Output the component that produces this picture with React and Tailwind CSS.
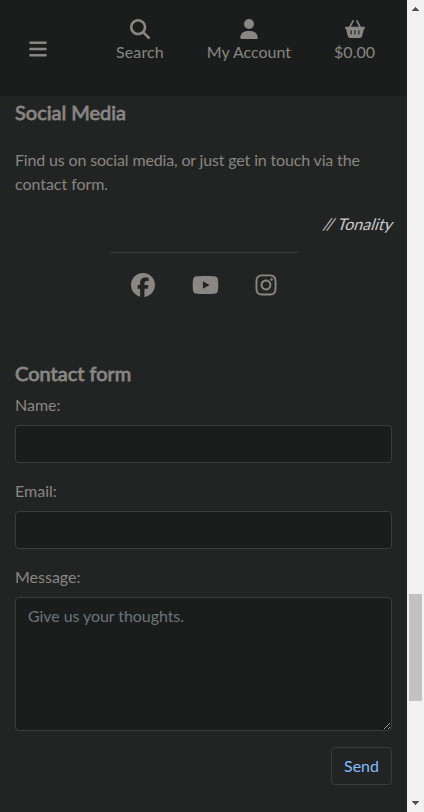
import { FaBars, FaMagnifyingGlass, FaUser, FaBasketShopping, FaFacebook, FaYoutube, FaInstagram } from "react-icons/fa6";

function NavItem({ icon: Icon, label, className }) {
  return (
    <a className={`flex flex-col items-center ${className}`}>
      <Icon className="h-5 w-auto" />
      <span className="mt-[1.5px] whitespace-nowrap leading-6">{label}</span>
    </a>
  );
}

function Header() {
  return (
    <header className="flex h-24 items-start bg-[#1b1d1c] pt-[18.5px]">
      <FaBars className="ml-[29px] mt-5 h-5 w-[18px] shrink-0" />
      <NavItem icon={FaMagnifyingGlass} label="Search" className="ml-[69px] tracking-[0.12px]" />
      <NavItem icon={FaUser} label="My Account" className="ml-[43px]" />
      <NavItem icon={FaBasketShopping} label="$0.00" className="ml-[43px]" />
    </header>
  );
}

function Heading({ children }) {
  return (
    <h2 className="text-xl font-normal leading-6 [-webkit-text-stroke:0.8px_#898684]">{children}</h2>
  );
}

function SocialMedia() {
  return (
    <section className="px-[15px] pt-1">
      <Heading>Social Media</Heading>
      <p className="mt-6 leading-6 tracking-[-0.155px]">
        Find us on social media, or just get in touch via the
        <br />
        <span className="tracking-[-0.05px]">contact form.</span>
      </p>
      <p className="-mr-[1.5px] mt-4 text-right leading-6 text-[#c9c9c9]">
        <span className="inline-block -skew-x-[18deg]">// Tonality</span>
      </p>
      <div className="mx-auto mt-4 h-px w-[189px] bg-[#383b3a]" />
      <div className="ml-[116px] mt-5 flex h-6 items-center">
        <FaFacebook className="h-6 w-6" />
        <FaYoutube className="ml-[36.5px] h-6 w-[27px]" />
        <FaInstagram className="ml-9 h-6 w-[22px]" />
      </div>
    </section>
  );
}

function Field({ label }) {
  return (
    <div className="mb-4">
      <label className="block leading-6">{label}</label>
      <input className="mt-2 block h-[38px] w-full rounded border border-[#3b3e3d] bg-[#1b1d1c] px-3 outline-none" />
    </div>
  );
}

function ContactForm() {
  return (
    <form className="mt-16 px-[15px]">
      <Heading>Contact form</Heading>
      <div className="mt-2">
        <Field label="Name:" />
        <Field label="Email:" />
      </div>
      <label className="block leading-6">Message:</label>
      <textarea
        placeholder="Give us your thoughts."
        className="mt-2 block h-[134px] w-full rounded border border-[#3b3e3d] bg-[#1b1d1c] px-3 py-1.5 leading-6 tracking-[-0.07px] outline-none placeholder:text-[#6c757d]"
      />
      <div className="mt-4 flex justify-end">
        <button type="button" className="h-[38px] w-[61px] rounded border border-[#383b3a] text-[#80bdff]">
          Send
        </button>
      </div>
    </form>
  );
}

function Arrow({ down }) {
  return (
    <svg viewBox="0 0 7 4" className={`h-1 w-[7px] ${down ? "rotate-180" : ""}`} fill="#505050" shapeRendering="crispEdges">
      <path d="M3 0h1v1h1v1h1v1h1v1H0V3h1V2h1V1h1z" />
    </svg>
  );
}

function Scrollbar() {
  return (
    <div className="flex w-[17px] shrink-0 flex-col items-center bg-[#f1f1f1]">
      <div className="flex h-[594px] items-start pt-[7px]">
        <Arrow />
      </div>
      <div className="h-[107px] w-[13px] bg-[#c1c1c1]" />
      <div className="flex grow items-end pb-[7px]">
        <Arrow down />
      </div>
    </div>
  );
}

export default function App() {
  return (
    <div className="flex h-[812px] w-[424px] overflow-hidden bg-[#222423] font-['Lato',sans-serif] text-base text-[#898684]">
      <main className="w-[407px] shrink-0">
        <Header />
        <SocialMedia />
        <ContactForm />
      </main>
      <Scrollbar />
    </div>
  );
}
